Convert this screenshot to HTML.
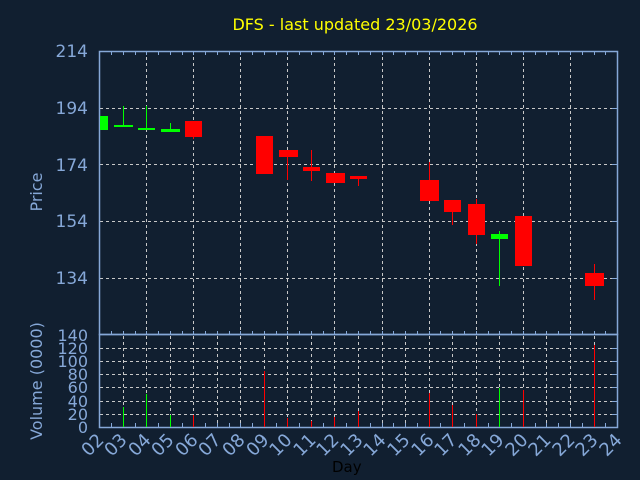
<!DOCTYPE html>
<html><head><style>
html,body{margin:0;padding:0;background:#111f30;}
svg{display:block}
text{font-family:"DejaVu Sans","Liberation Sans",sans-serif}
</style></head><body>
<svg width="640" height="480" viewBox="0 0 640 480" xmlns="http://www.w3.org/2000/svg">
<rect width="640" height="480" fill="#111f30"/>
<text x="355" y="30" fill="#ffff00" font-size="16" text-anchor="middle">DFS - last updated 23/03/2026</text>
<g stroke="#c8c8c8" stroke-width="1" stroke-dasharray="3,3" fill="none">
<path d="M100 108.5H612M100 164.5H612M100 221.5H612M100 278.5H612"/>
<path d="M146.5 51V334M193.5 51V334M240.5 51V334M287.5 51V334M334.5 51V334M382.5 51V334M429.5 51V334M476.5 51V334M523.5 51V334M570.5 51V334"/>
<path d="M100 348.5H612M100 361.5H612M100 374.5H612M100 387.5H612M100 401.5H612M100 414.5H612"/>
<path d="M123.5 336V427M146.5 336V427M170.5 336V427M193.5 336V427M217.5 336V427M240.5 336V427M264.5 336V427M287.5 336V427M311.5 336V427M334.5 336V427M358.5 336V427M382.5 336V427M405.5 336V427M429.5 336V427M452.5 336V427M476.5 336V427M499.5 336V427M523.5 336V427M546.5 336V427M570.5 336V427M594.5 336V427"/>
</g>
<g stroke="#86a8d8" stroke-width="1.5" fill="none">
<rect x="99.5" y="51.5" width="518" height="283"/>
<rect x="99.5" y="334.5" width="518" height="93"/>
</g>
<g stroke="#86a8d8" stroke-width="1" fill="none" id="ticks">
<path d="M111.5 51V55M123.5 51V55M135.5 51V55M146.5 51V55M158.5 51V55M170.5 51V55M182.5 51V55M193.5 51V55M205.5 51V55M217.5 51V55M229.5 51V55M240.5 51V55M252.5 51V55M264.5 51V55M276.5 51V55M287.5 51V55M299.5 51V55M311.5 51V55M323.5 51V55M334.5 51V55M346.5 51V55M358.5 51V55M370.5 51V55M382.5 51V55M393.5 51V55M405.5 51V55M417.5 51V55M429.5 51V55M440.5 51V55M452.5 51V55M464.5 51V55M476.5 51V55M488.5 51V55M499.5 51V55M511.5 51V55M523.5 51V55M535.5 51V55M546.5 51V55M558.5 51V55M570.5 51V55M582.5 51V55M594.5 51V55M605.5 51V55"/>
<path d="M111.5 331V335M123.5 331V335M135.5 331V335M146.5 331V335M158.5 331V335M170.5 331V335M182.5 331V335M193.5 331V335M205.5 331V335M217.5 331V335M229.5 331V335M240.5 331V335M252.5 331V335M264.5 331V335M276.5 331V335M287.5 331V335M299.5 331V335M311.5 331V335M323.5 331V335M334.5 331V335M346.5 331V335M358.5 331V335M370.5 331V335M382.5 331V335M393.5 331V335M405.5 331V335M417.5 331V335M429.5 331V335M440.5 331V335M452.5 331V335M464.5 331V335M476.5 331V335M488.5 331V335M499.5 331V335M511.5 331V335M523.5 331V335M535.5 331V335M546.5 331V335M558.5 331V335M570.5 331V335M582.5 331V335M594.5 331V335M605.5 331V335"/>
<path d="M111.5 423V427M123.5 423V427M135.5 423V427M146.5 423V427M158.5 423V427M170.5 423V427M182.5 423V427M193.5 423V427M205.5 423V427M217.5 423V427M229.5 423V427M240.5 423V427M252.5 423V427M264.5 423V427M276.5 423V427M287.5 423V427M299.5 423V427M311.5 423V427M323.5 423V427M334.5 423V427M346.5 423V427M358.5 423V427M370.5 423V427M382.5 423V427M393.5 423V427M405.5 423V427M417.5 423V427M429.5 423V427M440.5 423V427M452.5 423V427M464.5 423V427M476.5 423V427M488.5 423V427M499.5 423V427M511.5 423V427M523.5 423V427M535.5 423V427M546.5 423V427M558.5 423V427M570.5 423V427M582.5 423V427M594.5 423V427M605.5 423V427"/>
<path d="M612 108.5H618M612 164.5H618M612 221.5H618M612 278.5H618M612 348.5H618M612 361.5H618M612 374.5H618M612 387.5H618M612 401.5H618M612 414.5H618"/>
</g>
<g font-size="17" fill="#86a8d8" text-anchor="end">
<text x="88" y="57">214</text><text x="88" y="114">194</text><text x="88" y="171">174</text><text x="88" y="227">154</text><text x="88" y="284">134</text>
</g>
<g font-size="16" fill="#86a8d8" text-anchor="end">
<text x="88" y="341">140</text><text x="88" y="354">120</text><text x="88" y="367">100</text><text x="88" y="380">80</text><text x="88" y="393">60</text><text x="88" y="407">40</text><text x="88" y="420">20</text><text x="88" y="433">0</text>
</g>
<text transform="translate(42,192) rotate(-90)" font-size="16" fill="#86a8d8" text-anchor="middle">Price</text>
<text transform="translate(42,381) rotate(-90)" font-size="16" fill="#86a8d8" text-anchor="middle">Volume (0000)</text>
<g font-size="18" fill="#86a8d8" text-anchor="end">
<text transform="translate(105,441) rotate(-45)">02</text>
<text transform="translate(128,441) rotate(-45)">03</text>
<text transform="translate(152,441) rotate(-45)">04</text>
<text transform="translate(175,441) rotate(-45)">05</text>
<text transform="translate(199,441) rotate(-45)">06</text>
<text transform="translate(222,441) rotate(-45)">07</text>
<text transform="translate(246,441) rotate(-45)">08</text>
<text transform="translate(270,441) rotate(-45)">09</text>
<text transform="translate(293,441) rotate(-45)">10</text>
<text transform="translate(317,441) rotate(-45)">11</text>
<text transform="translate(340,441) rotate(-45)">12</text>
<text transform="translate(364,441) rotate(-45)">13</text>
<text transform="translate(387,441) rotate(-45)">14</text>
<text transform="translate(411,441) rotate(-45)">15</text>
<text transform="translate(435,441) rotate(-45)">16</text>
<text transform="translate(458,441) rotate(-45)">17</text>
<text transform="translate(482,441) rotate(-45)">18</text>
<text transform="translate(505,441) rotate(-45)">19</text>
<text transform="translate(529,441) rotate(-45)">20</text>
<text transform="translate(552,441) rotate(-45)">21</text>
<text transform="translate(576,441) rotate(-45)">22</text>
<text transform="translate(599,441) rotate(-45)">23</text>
<text transform="translate(623,441) rotate(-45)">24</text>
</g>
<text x="332" y="472" font-size="15" fill="#000">Day</text>
<g stroke-width="1">
<rect x="100" y="116" width="8" height="14" fill="#00ff00"/>
<path d="M123.5 106V126M146.5 106V130M170.5 123V131" stroke="#00ff00"/>
<rect x="114" y="125" width="19" height="2" fill="#00ff00"/>
<rect x="138" y="128" width="17" height="2" fill="#00ff00"/>
<rect x="161" y="129" width="19" height="3" fill="#00ff00"/>
<rect x="185" y="121" width="17" height="16" fill="#ff0000"/>
<path d="M193.5 137V139" stroke="#ff0000"/>
<rect x="256" y="136" width="17" height="38" fill="#ff0000"/>
<path d="M287.5 157V180M311.5 150V181M358.5 179V186M429.5 162V180M452.5 212V225M476.5 199V244M594.5 264V300" stroke="#ff0000"/>
<rect x="279" y="150" width="19" height="7" fill="#ff0000"/>
<rect x="303" y="167" width="17" height="4" fill="#ff0000"/>
<rect x="326" y="173" width="19" height="10" fill="#ff0000"/>
<rect x="350" y="176" width="17" height="3" fill="#ff0000"/>
<rect x="420" y="180" width="19" height="21" fill="#ff0000"/>
<rect x="444" y="200" width="17" height="12" fill="#ff0000"/>
<rect x="468" y="204" width="17" height="31" fill="#ff0000"/>
<path d="M499.5 231V286" stroke="#00ff00"/>
<rect x="491" y="234" width="17" height="5" fill="#00ff00"/>
<rect x="515" y="216" width="17" height="50" fill="#ff0000"/>
<rect x="585" y="273" width="19" height="13" fill="#ff0000"/>
</g>
<g stroke-width="1">
<path d="M123.5 407V427M146.5 394V427M170.5 415V427M499.5 388V427" stroke="#00ff00"/>
<path d="M193.5 415V427M264.5 371V427M287.5 418V427M311.5 421V427M334.5 417V427M358.5 411V427M429.5 393V427M452.5 405V427M476.5 414V427M523.5 390V427M594.5 345V427" stroke="#ff0000"/>
</g>
</svg>
</body></html>
